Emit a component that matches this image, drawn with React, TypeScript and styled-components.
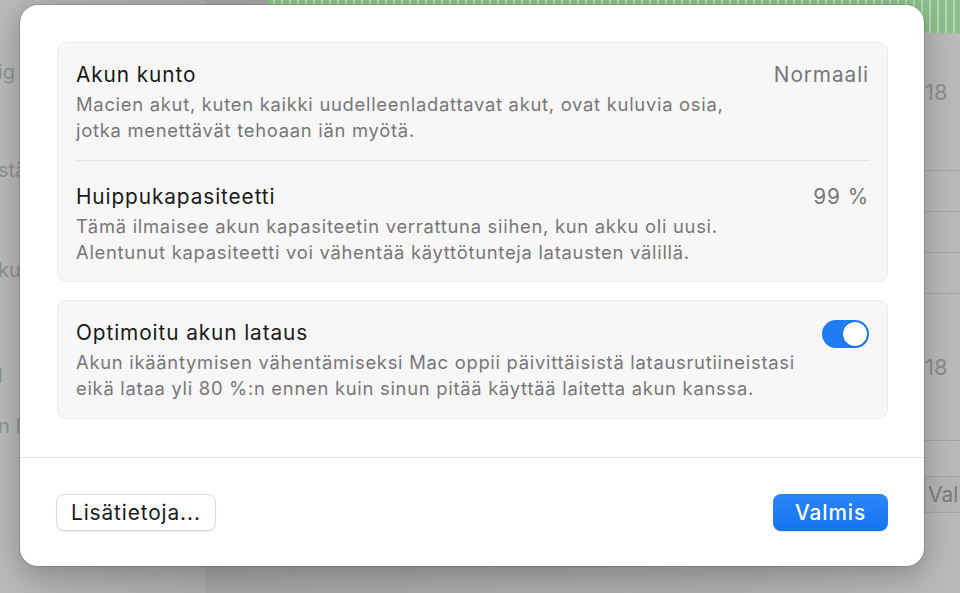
import React from "react";
import styled, { createGlobalStyle } from "styled-components";

const Global = createGlobalStyle`
  html, body { margin: 0; padding: 0; }
  body {
    width: 960px; height: 593px; overflow: hidden;
    font-family: Inter, "Noto Sans", "Liberation Sans", sans-serif;
    -webkit-font-smoothing: antialiased;
  }
`;

const Stage = styled.div`
  position: relative;
  width: 960px;
  height: 593px;
  overflow: hidden;
  display: flex;
`;

const Sidebar = styled.div`
  width: 207px;
  flex: none;
  background: linear-gradient(90deg, #b7bab9 0%, #aeb1b0 40%, #a9acab 100%);
  display: flex;
  flex-direction: column;
  padding-top: 58px;
  box-sizing: border-box;
  border-right: 1px solid #9c9e9d;
`;

const SideItem = styled.div<{ $gap: number }>`
  font-size: 20px;
  color: #8e9190;
  margin-left: -2px;
  margin-top: ${(p) => p.$gap}px;
  line-height: 28px;
  white-space: nowrap;
`;

const Content = styled.div`
  flex: 1;
  display: flex;
  flex-direction: column;
  background: linear-gradient(90deg, #a3a3a3 0%, #adadad 70%, #b9b9b9 100%);
`;

const ChartStrip = styled.div`
  height: 33px;
  margin-left: 60px;
  background: repeating-linear-gradient(
    90deg,
    #8cbf8b 0px,
    #8cbf8b 6px,
    #b3d6b2 6px,
    #b3d6b2 8px
  );
`;

const Rows = styled.div`
  display: flex;
  flex-direction: column;
`;

const Row = styled.div<{ $h: number; $line?: boolean }>`
  height: ${(p) => p.$h}px;
  border-bottom: ${(p) => (p.$line === false ? "none" : "1px solid #a2a2a2")};
  display: flex;
  align-items: center;
  justify-content: flex-end;
  box-sizing: border-box;
  font-size: 22px;
  color: #8d8d8d;
`;

const CellText = styled.span<{ $top?: number }>`
  width: 35px;
  text-align: left;
  padding-left: 1px;
  align-self: ${(p) => (p.$top !== undefined ? "flex-start" : "center")};
  margin-top: ${(p) => p.$top ?? 0}px;
`;

const ValBox = styled.div`
  width: 36px;
  height: 37px;
  background: #b4b4b4;
  border-top: 1px solid #a4a4a4;
  border-bottom: 1px solid #a4a4a4;
  border-left: 1px solid #a4a4a4;
  display: flex;
  align-items: center;
  padding-left: 3px;
  box-sizing: border-box;
  font-size: 21px;
  color: #7c7c7c;
`;

const Dialog = styled.div`
  position: absolute;
  left: 20px;
  top: 5px;
  width: 904px;
  height: 561px;
  background: #ffffff;
  border-radius: 18px;
  box-shadow: 0 0 0 1px rgba(0, 0, 0, 0.12), 0 8px 28px rgba(0, 0, 0, 0.25);
  display: flex;
  flex-direction: column;
  overflow: hidden;
`;

const Body = styled.div`
  padding: 37px 36px 0 37px;
  display: flex;
  flex-direction: column;
  gap: 18px;
  flex: 1;
`;

const Card = styled.div`
  background: #f7f7f7;
  border: 1px solid #ececec;
  border-radius: 9px;
  padding: 0 17px;
  display: flex;
  flex-direction: column;
`;

const Section = styled.div<{ $divider?: boolean }>`
  display: flex;
  align-items: flex-start;
  gap: 20px;
  padding: ${(p) => (p.$divider ? "23px 1px 16px" : "19px 1px 17px")};
  border-top: ${(p) => (p.$divider ? "1px solid #e4e4e4" : "none")};
`;

const Texts = styled.div`
  flex: 1;
  display: flex;
  flex-direction: column;
`;

const Title = styled.div`
  font-size: 20.8px;
  line-height: 26px;
  color: #1a1a1a;
  letter-spacing: 0.9px;
  white-space: nowrap;
`;

const Desc = styled.div`
  margin-top: 3px;
  font-size: 18.4px;
  line-height: 26px;
  color: #777777;
  letter-spacing: 0.72px;
  white-space: nowrap;
`;

const Value = styled.div`
  font-size: 20.8px;
  line-height: 26px;
  color: #777777;
  letter-spacing: 0.9px;
  white-space: nowrap;
`;

const Toggle = styled.div<{ $on: boolean }>`
  width: 47px;
  height: 28px;
  border-radius: 14px;
  background: ${(p) => (p.$on ? "#1f7cf2" : "#e2e2e2")};
  display: flex;
  align-items: center;
  justify-content: ${(p) => (p.$on ? "flex-end" : "flex-start")};
  padding: 2px;
  box-sizing: border-box;
  flex: none;
`;

const Knob = styled.div`
  width: 24px;
  height: 24px;
  border-radius: 50%;
  background: #ffffff;
  box-shadow: 0 0 1px rgba(0, 0, 0, 0.3), 0 1px 2px rgba(0, 0, 0, 0.2);
`;

const Footer = styled.div`
  border-top: 1px solid #e3e3e3;
  padding: 36px 36px 35px 36px;
  display: flex;
  justify-content: space-between;
  align-items: center;
`;

const Button = styled.button<{ $primary?: boolean }>`
  height: 37px;
  padding: 0 ${(p) => (p.$primary ? "22px" : "14px")};
  border-radius: 8px;
  font-family: inherit;
  font-size: 20.8px;
  letter-spacing: 0.9px;
  font-weight: ${(p) => (p.$primary ? 500 : 400)};
  color: ${(p) => (p.$primary ? "#ffffff" : "#1a1a1a")};
  background: ${(p) =>
    p.$primary ? "linear-gradient(180deg, #2a86fb 0%, #1674f0 100%)" : "#ffffff"};
  border: ${(p) => (p.$primary ? "none" : "1px solid #dadada")};
  box-shadow: ${(p) =>
    p.$primary ? "0 1px 1px rgba(0,0,0,0.12)" : "0 1px 1px rgba(0,0,0,0.08)"};
  cursor: default;
`;

export default function App() {
  return (
    <>
      <Global />
      <Stage>
        <Sidebar>
          <SideItem $gap={0}>ig</SideItem>
          <SideItem $gap={70}>stä</SideItem>
          <SideItem $gap={72}>ku</SideItem>
          <SideItem $gap={78}>l</SideItem>
          <SideItem $gap={22}>n D</SideItem>
        </Sidebar>
        <Content>
          <ChartStrip />
          <Rows>
            <Row $h={138}>
              <CellText $top={46}>18</CellText>
            </Row>
            <Row $h={41} />
            <Row $h={41} />
            <Row $h={41} />
            <Row $h={147}>
              <CellText>18</CellText>
            </Row>
            <Row $h={34} $line={false} />
            <Row $h={38} $line={false}>
              <ValBox>Val</ValBox>
            </Row>
          </Rows>
        </Content>

        <Dialog>
          <Body>
            <Card>
              <Section>
                <Texts>
                  <Title>Akun kunto</Title>
                  <Desc>
                    Macien akut, kuten kaikki uudelleenladattavat akut, ovat kuluvia osia,
                    <br />
                    jotka menettävät tehoaan iän myötä.
                  </Desc>
                </Texts>
                <Value>Normaali</Value>
              </Section>
              <Section $divider>
                <Texts>
                  <Title>Huippukapasiteetti</Title>
                  <Desc>
                    Tämä ilmaisee akun kapasiteetin verrattuna siihen, kun akku oli uusi.
                    <br />
                    Alentunut kapasiteetti voi vähentää käyttötunteja latausten välillä.
                  </Desc>
                </Texts>
                <Value>99 %</Value>
              </Section>
            </Card>
            <Card>
              <Section>
                <Texts>
                  <Title>Optimoitu akun lataus</Title>
                  <Desc>
                    Akun ikääntymisen vähentämiseksi Mac oppii päivittäisistä latausrutiineistasi
                    <br />
                    eikä lataa yli 80 %:n ennen kuin sinun pitää käyttää laitetta akun kanssa.
                  </Desc>
                </Texts>
                <Toggle $on>
                  <Knob />
                </Toggle>
              </Section>
            </Card>
          </Body>
          <Footer>
            <Button>Lisätietoja...</Button>
            <Button $primary>Valmis</Button>
          </Footer>
        </Dialog>
      </Stage>
    </>
  );
}
